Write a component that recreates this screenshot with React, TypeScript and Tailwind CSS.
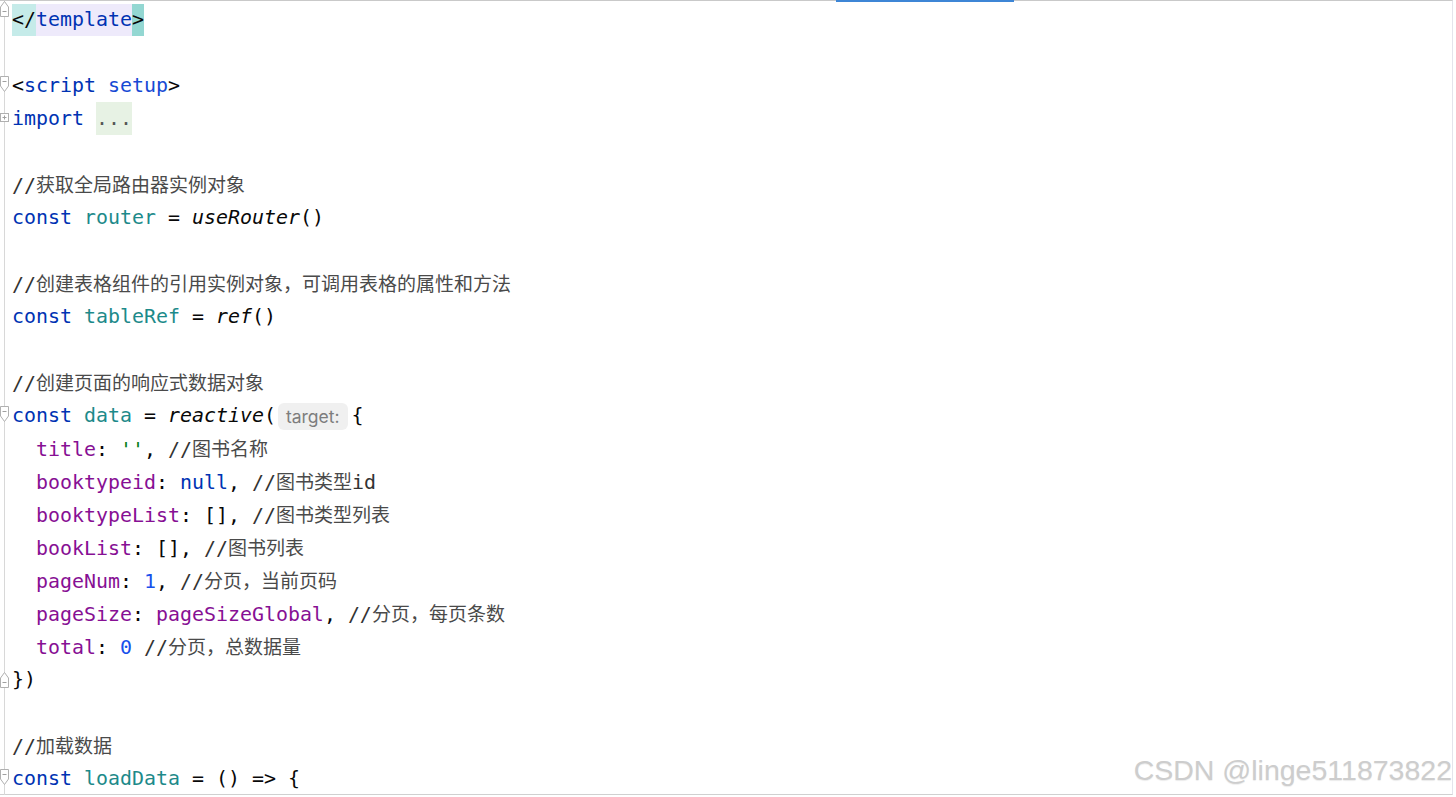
import React from "react";

const MONO = "font-['DejaVu_Sans_Mono','Liberation_Mono',monospace]";

const K = ({ children }: { children: React.ReactNode }) => <span className="text-[#0033b3]">{children}</span>;
const V = ({ children }: { children: React.ReactNode }) => <span className="text-[#1d8a8a]">{children}</span>;
const F = ({ children }: { children: React.ReactNode }) => <span className="italic text-[#080808]">{children}</span>;
const P = ({ children }: { children: React.ReactNode }) => <span className="text-[#871094]">{children}</span>;
const N = ({ children }: { children: React.ReactNode }) => <span className="text-[#1750eb]">{children}</span>;
const S = ({ children }: { children: React.ReactNode }) => <span className="text-[#067d17]">{children}</span>;

const C = ({ cn, tail }: { cn: string; tail?: string }) => (
  <span className="text-[#333333]">
    //
    <span className="font-['Noto_Sans_CJK_SC',sans-serif] text-[19px] text-[#4a4a4a]">{cn}</span>
    {tail ? <span>{tail}</span> : null}
  </span>
);

type Fold = "open" | "close" | "closeTop" | "collapsed" | undefined;

function FoldIcon({ kind }: { kind: Fold }) {
  if (!kind) return null;
  if (kind === "open") {
    return (
      <svg className="absolute left-[-5px] top-[7px]" width="10" height="17" viewBox="0 0 10 17">
        <path d="M0.5 0.5 H8.5 V10 L4.5 15.5 L0.5 10 Z" fill="#ffffff" stroke="#b0b0b0" />
        <path d="M2.5 5.5 H6.5" stroke="#a0a0a0" />
      </svg>
    );
  }
  if (kind === "close" || kind === "closeTop") {
    return (
      <svg
        className={kind === "closeTop" ? "absolute left-[-5px] top-[-3px]" : "absolute left-[-5px] top-[8px]"}
        width="10"
        height="17"
        viewBox="0 0 10 17"
      >
        <path d="M0.5 16.5 H8.5 V7 L4.5 1.5 L0.5 7 Z" fill="#ffffff" stroke="#b0b0b0" />
        <path d="M2.5 11.5 H6.5" stroke="#a0a0a0" />
      </svg>
    );
  }
  return (
    <svg className="absolute left-[-5px] top-[11px]" width="10" height="10" viewBox="0 0 10 10">
      <rect x="0.5" y="0.5" width="8" height="8" fill="#ffffff" stroke="#b0b0b0" />
      <path d="M2.5 4.5 H6.5 M4.5 2.5 V6.5" stroke="#a0a0a0" />
    </svg>
  );
}

function Row({ fold, children }: { fold?: Fold; children?: React.ReactNode }) {
  return (
    <div className="relative flex h-[33px] items-center">
      <FoldIcon kind={fold} />
      <div className="w-[7px] shrink-0" />
      <div className="whitespace-pre leading-[33px]">{children}</div>
    </div>
  );
}

export default function App() {
  return (
    <div className="relative h-[797px] w-[1456px] overflow-hidden bg-white">
      <div className="flex h-[795px] w-[1453px] flex-col border-b border-r border-t border-b-[#d0d0d0] border-r-[#e4e4ec] border-t-[#c9c9c9]">
        <div className={`ml-[4px] flex-1 border-l border-[#d8d8d8] pt-[2px] text-[19.93px] text-[#080808] ${MONO}`}>
          <Row fold="closeTop">
            <span className="inline-block h-[32px] bg-[#c5ebe9] leading-[32px]">&lt;/</span>
            <span className="inline-block h-[32px] bg-[#eeeafb] leading-[32px] text-[#0033b3]">template</span>
            <span className="inline-block h-[32px] bg-[#93d7d2] leading-[32px]">&gt;</span>
          </Row>
          <Row />
          <Row fold="open">
            &lt;<K>script</K> <span className="text-[#174ad4]">setup</span>&gt;
          </Row>
          <Row fold="collapsed">
            <K>import</K> <span className="inline-block h-[33px] bg-[#e7f2e4] leading-[33px] text-[#555555]">...</span>
          </Row>
          <Row />
          <Row>
            <C cn="获取全局路由器实例对象" />
          </Row>
          <Row>
            <K>const</K> <V>router</V> = <F>useRouter</F>()
          </Row>
          <Row />
          <Row>
            <C cn="创建表格组件的引用实例对象，可调用表格的属性和方法" />
          </Row>
          <Row>
            <K>const</K> <V>tableRef</V> = <F>ref</F>()
          </Row>
          <Row />
          <Row>
            <C cn="创建页面的响应式数据对象" />
          </Row>
          <Row fold="open">
            <K>const</K> <V>data</V> = <F>reactive</F>(
            <span className="ml-[2px] mr-[4px] inline-flex h-[27px] items-center rounded-[6px] bg-[#f0f0f0] px-[8px] align-middle font-['Inter',sans-serif] text-[17.5px] leading-none text-[#7d7d7d]">
              target:
            </span>
            {"{"}
          </Row>
          <Row>
            {"  "}
            <P>title</P>: <S>''</S>, <C cn="图书名称" />
          </Row>
          <Row>
            {"  "}
            <P>booktypeid</P>: <K>null</K>, <C cn="图书类型" tail="id" />
          </Row>
          <Row>
            {"  "}
            <P>booktypeList</P>: [], <C cn="图书类型列表" />
          </Row>
          <Row>
            {"  "}
            <P>bookList</P>: [], <C cn="图书列表" />
          </Row>
          <Row>
            {"  "}
            <P>pageNum</P>: <N>1</N>, <C cn="分页，当前页码" />
          </Row>
          <Row>
            {"  "}
            <P>pageSize</P>: <P>pageSizeGlobal</P>, <C cn="分页，每页条数" />
          </Row>
          <Row>
            {"  "}
            <P>total</P>: <N>0</N> <C cn="分页，总数据量" />
          </Row>
          <Row fold="close">{"})"}</Row>
          <Row />
          <Row>
            <C cn="加载数据" />
          </Row>
          <Row fold="open">
            <K>const</K> <V>loadData</V> = () =&gt; {"{"}
          </Row>
        </div>
      </div>
      <div className="absolute left-[836px] top-0 h-[2px] w-[178px] bg-[#3d86d6]" />
      <div className="absolute right-[4px] top-[755px] whitespace-nowrap font-['Liberation_Sans',Arial,sans-serif] text-[28.5px] leading-[30px] text-[#cdcdcd] [text-shadow:0_1px_1px_rgba(0,0,0,0.08)]">
        CSDN @linge511873822
      </div>
    </div>
  );
}
